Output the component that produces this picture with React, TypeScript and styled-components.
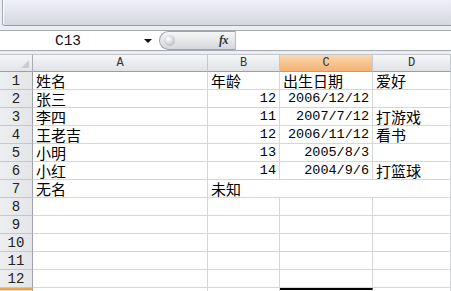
import styled, { createGlobalStyle } from 'styled-components';

const GlobalStyle = createGlobalStyle`
	html, body {
		margin: 0;
		padding: 0;
		background: #ffffff;
		overflow: hidden;
	}
	body {
		width: 451px;
		height: 291px;
		font-family: "Noto Sans CJK SC", sans-serif;
	}
`;

const CJK = `"Noto Sans CJK SC", sans-serif`;
const MONO = `"Liberation Mono", "Noto Sans CJK SC", monospace`;

const Window = styled.div`
	display: flex;
	flex-direction: column;
	width: 451px;
	height: 291px;
	overflow: hidden;
	background: #eceef2;
	& > * {
		flex-shrink: 0;
	}
`;

const Ribbon = styled.div`
	height: 25px;
	margin-left: 2px;
	border-left: 1px solid #a3a7af;
	border-bottom: 1px solid #979ba3;
	border-bottom-left-radius: 3px;
	background: linear-gradient(#eef0f5, #e1e3ea 55%, #d5d8e0);
	box-shadow: inset 1px 0 0 #ffffff;
`;

const FormulaBar = styled.div`
	display: flex;
	align-items: stretch;
	height: 19px;
	margin-top: 4px;
	border-top: 1px solid #a6aab1;
	border-bottom: 1px solid #a6aab1;
	background: #ffffff;
`;

const NameBox = styled.div`
	position: relative;
	display: flex;
	align-items: center;
	justify-content: center;
	width: 158px;
	padding-right: 22px;
	box-sizing: border-box;
	font-family: ${MONO};
	font-size: 14.5px;
	color: #111;
`;

const DropArrow = styled.span`
	position: absolute;
	right: 6px;
	top: 8px;
	width: 0;
	height: 0;
	border-left: 4px solid transparent;
	border-right: 4px solid transparent;
	border-top: 4px solid #111;
`;

const FxPill = styled.div`
	display: flex;
	align-items: center;
	justify-content: space-between;
	width: 77px;
	margin-left: 1px;
	padding: 0 7px 0 4px;
	box-sizing: border-box;
	border: 1px solid #a0a3a9;
	border-right-color: #b9bcc1;
	border-top-left-radius: 10px;
	border-bottom-left-radius: 10px;
	background: linear-gradient(#f6f6f7, #e6e7e9 50%, #d5d7da);
`;

const Knob = styled.span`
	width: 11px;
	height: 11px;
	border-radius: 50%;
	background: radial-gradient(circle at 40% 35%, #ffffff, #c9cbcf 60%, #a9acb1);
`;

const FxLabel = styled.span`
	font-family: "Liberation Serif", serif;
	font-style: italic;
	font-weight: bold;
	font-size: 12px;
	color: #333;
	letter-spacing: -0.5px;
`;

const FormulaInput = styled.div`
	flex: 1;
	background: #ffffff;
`;

const Sheet = styled.div`
	display: grid;
	grid-template-columns: 33px 175px 72px 93px 1fr;
	grid-template-rows: 18px;
	grid-auto-rows: 18px;
	margin-top: 3px;
	background: #ffffff;
`;

const Corner = styled.div`
	position: relative;
	background: linear-gradient(#f4f5f7, #e3e4e7);
	border-right: 1px solid #a9acb1;
	border-bottom: 1px solid #9b9ea4;
	border-top: 1px solid #c4c7cc;
	box-sizing: border-box;
	&::after {
		content: '';
		position: absolute;
		right: 3px;
		bottom: 3px;
		border-left: 8px solid transparent;
		border-bottom: 8px solid #c9ccd1;
	}
`;

const ColHead = styled.div<{ $active?: boolean }>`
	display: flex;
	align-items: center;
	justify-content: center;
	box-sizing: border-box;
	border-top: 1px solid #c4c7cc;
	border-right: 1px solid #c5c8cd;
	border-bottom: 1px solid ${(p) => (p.$active ? '#e5963f' : '#9b9ea4')};
	background: ${(p) =>
		p.$active
			? 'linear-gradient(#fbd9b2, #f6c28c 55%, #f3b375)'
			: 'linear-gradient(#f6f7f8, #eaebee 55%, #e1e2e6)'};
	font-family: ${MONO};
	font-size: 12px;
	color: #333;
`;

const RowHead = styled.div<{ $active?: boolean }>`
	display: flex;
	align-items: center;
	justify-content: center;
	box-sizing: border-box;
	border-right: 1px solid #9ea1a7;
	border-bottom: 1px solid #c4c7cc;
	border-top: ${(p) => (p.$active ? '2px solid #f0a050' : 'none')};
	background: ${(p) =>
		p.$active ? 'linear-gradient(#fbd9b2, #f3b375)' : 'linear-gradient(90deg, #eceef0, #e3e5e8)'};
	font-family: ${MONO};
	font-size: 14px;
	line-height: 16px;
	color: #222;
	padding-top: 1px;
`;

const Cell = styled.div<{ $num?: boolean; $span?: number; $selected?: boolean }>`
	display: flex;
	align-items: center;
	justify-content: ${(p) => (p.$num ? 'flex-end' : 'flex-start')};
	grid-column: ${(p) => (p.$span ? `span ${p.$span}` : 'auto')};
	box-sizing: border-box;
	padding: ${(p) => (p.$num ? '1px 3px 0 0' : '0 0 0 3px')};
	border-right: 1px solid #d6d7d9;
	border-bottom: 1px solid #d6d7d9;
	border-top: ${(p) => (p.$selected ? '2px solid #000' : 'none')};
	font-family: ${(p) => (p.$num ? MONO : CJK)};
	font-size: ${(p) => (p.$num ? '13.5px' : '15px')};
	line-height: 16px;
	color: #000;
	white-space: nowrap;
`;

type Row = {
	name?: string;
	age?: string;
	birth?: string;
	hobby?: string;
	merged?: boolean;
};

const rows: Row[] = [
	{ name: '姓名', age: '年龄', birth: '出生日期', hobby: '爱好' },
	{ name: '张三', age: '12', birth: '2006/12/12' },
	{ name: '李四', age: '11', birth: '2007/7/12', hobby: '打游戏' },
	{ name: '王老吉', age: '12', birth: '2006/11/12', hobby: '看书' },
	{ name: '小明', age: '13', birth: '2005/8/3' },
	{ name: '小红', age: '14', birth: '2004/9/6', hobby: '打篮球' },
	{ name: '无名', age: '未知', merged: true },
	{},
	{},
	{},
	{},
	{},
	{},
];

const isNum = (v?: string) => !!v && /^[0-9/]+$/.test(v);

const App = () => {
	return (
		<Window>
			<GlobalStyle />
			<Ribbon />
			<FormulaBar>
				<NameBox>
					C13
					<DropArrow />
				</NameBox>
				<FxPill>
					<Knob />
					<FxLabel>fx</FxLabel>
				</FxPill>
				<FormulaInput />
			</FormulaBar>
			<Sheet>
				<Corner />
				<ColHead>A</ColHead>
				<ColHead>B</ColHead>
				<ColHead $active>C</ColHead>
				<ColHead>D</ColHead>
				{rows.map((r, i) => {
					const n = i + 1;
					const selectedRow = n === 13;
					return [
						<RowHead key={`h${n}`} $active={selectedRow}>
							{n}
						</RowHead>,
						<Cell key={`a${n}`}>{r.name}</Cell>,
						r.merged ? (
							<Cell key={`b${n}`} $span={3}>
								{r.age}
							</Cell>
						) : (
							[
								<Cell key={`b${n}`} $num={isNum(r.age)}>
									{r.age}
								</Cell>,
								<Cell key={`c${n}`} $num={isNum(r.birth)} $selected={selectedRow}>
									{r.birth}
								</Cell>,
								<Cell key={`d${n}`}>{r.hobby}</Cell>,
							]
						),
					];
				})}
			</Sheet>
		</Window>
	);
};

export default App;
